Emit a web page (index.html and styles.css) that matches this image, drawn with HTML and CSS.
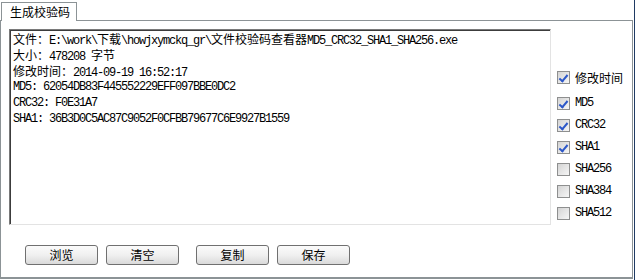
FILE: index.html
```html
<!DOCTYPE html>
<html lang="zh-CN">
<head>
    <meta charset="UTF-8">
    <title>文件校验码查看器</title>
    <link rel="stylesheet" href="styles.css">
</head>
<body>
    <div class="window">
        <div class="tabs">
            <div class="tab">生成校验码</div>
        </div>
        <div class="panel">
            <div class="main-row">
                <div class="output">
                    <div class="line"><span class="cn">文件：</span>E:\work\<span class="cn">下载</span>\howjxymckq_gr\<span class="cn">文件校验码查看器</span>MD5_CRC32_SHA1_SHA256.exe</div>
                    <div class="line"><span class="cn">大小：</span>478208 <span class="cn">字节</span></div>
                    <div class="line"><span class="cn">修改时间：</span>2014-09-19 16:52:17</div>
                    <div class="line">MD5: 62054DB83F445552229EFF097BBE0DC2</div>
                    <div class="line">CRC32: F0E31A7</div>
                    <div class="line">SHA1: 36B3D0C5AC87C9052F0CFBB79677C6E9927B1559</div>
                </div>
                <div class="options">
                    <label class="option first"><span class="box checked"></span><span class="cn">修改时间</span></label>
                    <label class="option"><span class="box checked"></span><span class="mono">MD5</span></label>
                    <label class="option"><span class="box checked"></span><span class="mono">CRC32</span></label>
                    <label class="option"><span class="box checked"></span><span class="mono">SHA1</span></label>
                    <label class="option"><span class="box"></span><span class="mono">SHA256</span></label>
                    <label class="option"><span class="box"></span><span class="mono">SHA384</span></label>
                    <label class="option"><span class="box"></span><span class="mono">SHA512</span></label>
                </div>
            </div>
            <div class="buttons">
                <button>浏览</button>
                <button>清空</button>
                <button class="spaced">复制</button>
                <button>保存</button>
            </div>
        </div>
    </div>
</body>
</html>
```

FILE: styles.css
```css
body {
    margin: 0;
    background: white;
    font-family: "Noto Sans CJK SC", "Liberation Sans", sans-serif;
    font-size: 12px;
    color: #000;
}

.window {
    width: 634px;
    height: 280px;
    border-right: 1px solid #1f3a63;
}

.tabs {
    height: 20px;
    display: flex;
    align-items: flex-end;
}

.tab {
    height: 18px;
    width: 66px;
    padding-left: 8px;
    margin-left: 1px;
    border: 1px solid #8c9396;
    border-bottom: none;
    background: white;
    line-height: 18px;
    position: relative;
    z-index: 1;
    margin-bottom: -1px;
}

.panel {
    width: 633px;
    height: 259px;
    border: 1px solid #8c9396;
    border-bottom-width: 2px;
    padding: 8px 0 0 8px;
    box-sizing: border-box;
}

.main-row {
    display: flex;
}

.output {
    width: 542px;
    height: 196px;
    box-sizing: border-box;
    border: 1px solid;
    border-color: #7a7a7a #e3e3e3 #e3e3e3 #7a7a7a;
    box-shadow: inset 1px 1px 0 #3c3c3c;
    padding: 1px 0 0 3px;
    font-family: "Liberation Mono", monospace;
    letter-spacing: -1.2px;
    white-space: nowrap;
    overflow: hidden;
}

.line {
    height: 16px;
    line-height: 16px;
}

.cn {
    font-family: "Noto Sans CJK SC", sans-serif;
    letter-spacing: 0;
}

.mono {
    font-family: "Liberation Mono", monospace;
    letter-spacing: -1.2px;
}

.options {
    margin-left: 6px;
    padding-top: 37px;
    display: flex;
    flex-direction: column;
}

.option {
    height: 22px;
    display: flex;
    align-items: center;
    gap: 5px;
}

.option.first {
    margin-bottom: 4px;
}

.box {
    width: 11px;
    height: 11px;
    border: 1px solid #8e8f8f;
    background: linear-gradient(135deg, #d4d4d4, #f6f6f6);
    position: relative;
}

.box.checked::after {
    content: "";
    position: absolute;
    left: 3px;
    top: 1px;
    width: 3px;
    height: 7px;
    border: solid #2c57c8;
    border-width: 0 2px 2px 0;
    transform: rotate(40deg);
}

.buttons {
    margin-top: 20px;
    padding-left: 16px;
    display: flex;
    gap: 8px;
}

.buttons .spaced {
    margin-left: 9px;
}

button {
    width: 73px;
    height: 20px;
    border: 1px solid #707070;
    border-radius: 3px;
    background: linear-gradient(#fbfbfb, #f0f0f0 50%, #dadada);
    font-family: "Noto Sans CJK SC", sans-serif;
    font-size: 12px;
    padding: 0;
    line-height: 18px;
    color: #000;
}
```
